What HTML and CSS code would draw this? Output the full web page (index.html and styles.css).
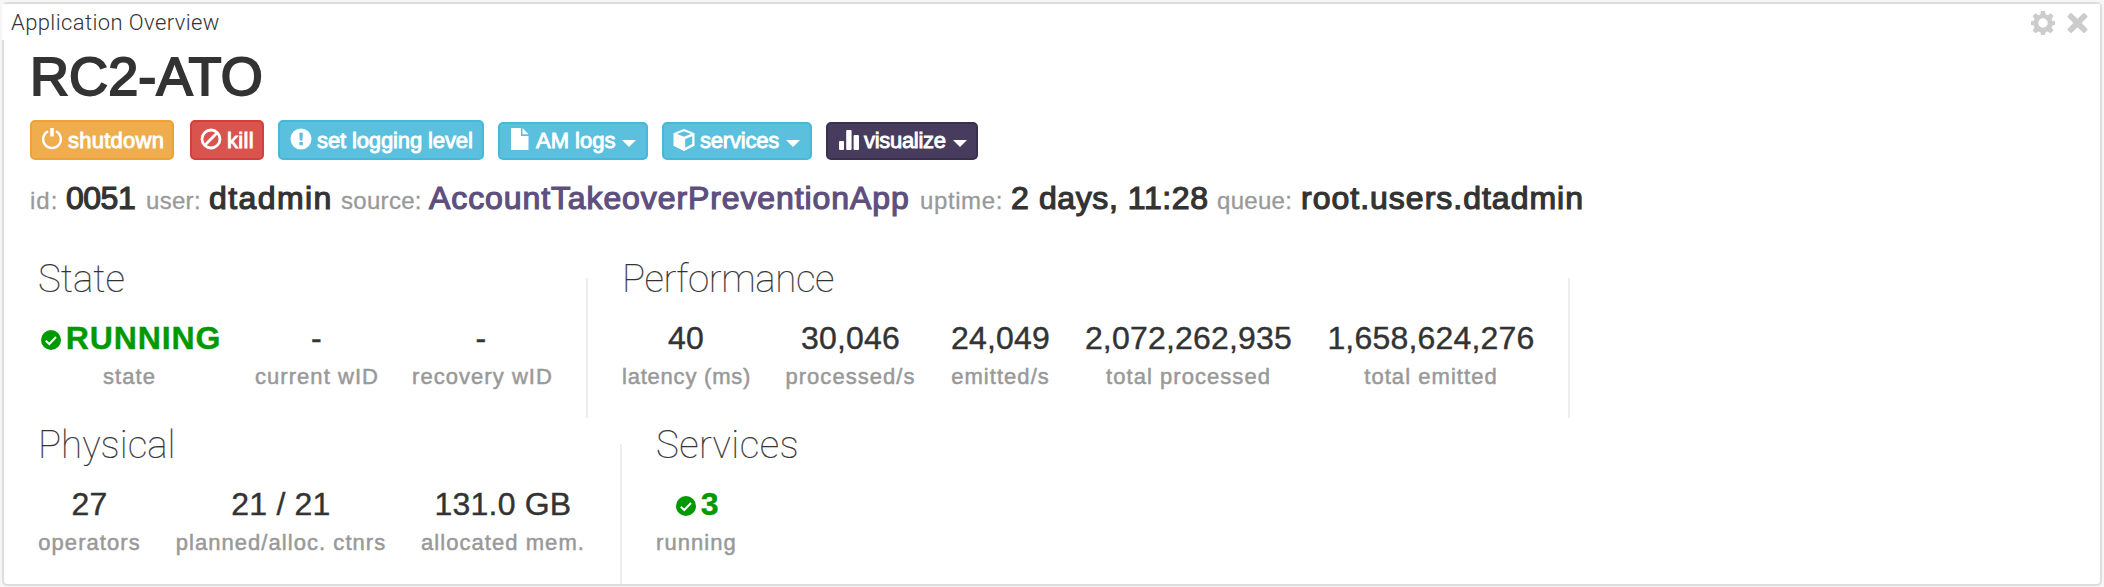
FILE: index.html
```html
<!DOCTYPE html>
<html lang="en">
<head>
<meta charset="utf-8">
<title>Application Overview</title>
<link rel="stylesheet" href="styles.css">
</head>
<body>
<main class="widget">
  <header class="widget-header">
    <h3 class="widget-title">Application Overview</h3>
    <div class="widget-tools">
      <svg class="gear" viewBox="0 0 24 24"><path fill-rule="evenodd" d="M10 0h4l.7 3.4 2 .9 3-2 2.800 2.800-2 3 .9 2L24 10.300v3.500l-2.600.700-.9 2 1.900 2.900-2.900 2.900-3-1.900-2 .9L14 24h-4l-.6-2.700-2-.9-3 1.900-2.800-2.900 1.900-2.900-.9-2L0 13.800v-3.500l2.600-.3.900-2-1.900-2.900 2.800-2.800 3 2 2-.9zM12 7.300a4.700 4.700 0 1 0 0 9.400a4.700 4.700 0 1 0 0-9.400z"/></svg>
      <svg class="close" viewBox="0 0 22 22"><path d="M5 .8 11 6.600 17 .8q.8-.6 1.500 0l2.700 2.700q.6.700 0 1.500L15.400 11l5.800 6q.6.800 0 1.500l-2.700 2.700q-.7.600-1.500 0L11 15.400l-6 5.800q-.8.600-1.500 0L.8 18.500q-.6-.7 0-1.500l5.800-6L.8 5Q.2 4.200.8 3.500L3.500.8Q4.200.2 5 .8z"/></svg>
    </div>
  </header>
  <div class="widget-body">
    <h1 class="app-name">RC2-ATO</h1>
    <div class="actions">
      <button class="btn warning"><svg width="22" height="22" viewBox="0 0 22 22"><path d="M7 3.200a8.900 8.900 0 1 0 8 0" fill="none" stroke="#fff" stroke-width="2.300"/><path d="M9.200 0h3.600v8.500H9.200z"/></svg><span class="t-shutdown">shutdown</span></button>
      <button class="btn danger"><svg width="22" height="22" viewBox="0 0 22 22"><g fill="none" stroke="#fff" stroke-width="2.800"><circle cx="11" cy="11" r="9"/><path d="M4.800 17.200 17.200 4.800"/></g></svg><span class="t-kill">kill</span></button>
      <button class="btn info logging"><svg width="22" height="22" viewBox="0 0 22 22"><path fill-rule="evenodd" d="M11 .5a10.500 10.500 0 1 0 0 21a10.500 10.500 0 1 0 0-21zM9.300 4.800h3.600l-.5 7.800H9.800zM9.400 14h3.400v3.200H9.400z"/></svg><span>set logging level</span></button>
      <button class="btn info menu am"><svg width="18" height="22" viewBox="0 0 18 22"><path d="M0 0h10v8h7.500v14H0zM11.500 0l6 6.300h-6z"/></svg><span>AM logs</span><i class="caret"></i></button>
      <button class="btn info menu services"><svg width="22" height="22" viewBox="0 0 22 22"><path fill-rule="evenodd" d="M11 0 21.500 4.300v12.500L11 22 .5 16.800V4.300zM11 2.200 4 5l7 2.800L18 5zM12.200 10v8.700l7-3.600V7.200z"/></svg><span>services</span><i class="caret"></i></button>
      <button class="btn primary menu visualize"><svg width="20" height="20" viewBox="0 0 20 20"><rect x="0" y="11" width="5" height="9" rx="1"/><rect x="7.200" y="0" width="5.400" height="20" rx="1"/><rect x="14.600" y="5" width="5.400" height="15" rx="1"/></svg><span>visualize</span><i class="caret"></i></button>
    </div>
    <div class="meta">
      <span class="key k-id">id:</span><b class="val v-id">0051</b>
      <span class="key">user:</span><b class="val v-user">dtadmin</b>
      <span class="key">source:</span><a class="val v-source">AccountTakeoverPreventionApp</a>
      <span class="key k-uptime">uptime:</span><b class="val v-uptime">2 days, 11:28</b>
      <span class="key">queue:</span><b class="val v-queue">root.users.dtadmin</b>
    </div>
    <div class="row">
      <section class="group state">
        <h2>State</h2>
        <div class="stats">
          <div class="stat"><div class="num ok"><svg class="check" viewBox="0 0 20 20"><circle cx="10" cy="10" r="10"/><path d="M4.800 10.800 8.300 14l6.700-7" fill="none" stroke="#fff" stroke-width="2"/></svg><span>RUNNING</span></div><div class="label">state</div></div>
          <div class="stat"><div class="num">-</div><div class="label">current wID</div></div>
          <div class="stat"><div class="num">-</div><div class="label">recovery wID</div></div>
        </div>
      </section>
      <section class="group performance">
        <h2>Performance</h2>
        <div class="stats">
          <div class="stat"><div class="num">40</div><div class="label tight">latency (ms)</div></div>
          <div class="stat"><div class="num">30,046</div><div class="label">processed/s</div></div>
          <div class="stat"><div class="num">24,049</div><div class="label">emitted/s</div></div>
          <div class="stat"><div class="num">2,072,262,935</div><div class="label">total processed</div></div>
          <div class="stat"><div class="num">1,658,624,276</div><div class="label">total emitted</div></div>
        </div>
      </section>
    </div>
    <div class="row">
      <section class="group physical">
        <h2>Physical</h2>
        <div class="stats">
          <div class="stat"><div class="num">27</div><div class="label">operators</div></div>
          <div class="stat"><div class="num">21 / 21</div><div class="label">planned/alloc. ctnrs</div></div>
          <div class="stat"><div class="num">131.0 GB</div><div class="label">allocated mem.</div></div>
        </div>
      </section>
      <section class="group running">
        <h2>Services</h2>
        <div class="stats">
          <div class="stat"><div class="num ok"><svg class="check" viewBox="0 0 20 20"><circle cx="10" cy="10" r="10"/><path d="M4.800 10.800 8.300 14l6.700-7" fill="none" stroke="#fff" stroke-width="2"/></svg><span>3</span></div><div class="label">running</div></div>
        </div>
      </section>
    </div>
  </div>
</main>
</body>
</html>
```
FILE: styles.css
```css
* { box-sizing: border-box; }
html { height: 100%; }
body {
  height: 587px;
  margin: 0;
  padding: 2px;
  overflow: hidden;
  background: #f6f6f6;
  color: #333;
  font-family: "Liberation Sans", Arial, sans-serif;
}
h1, h2, h3 { margin: 0; }
svg { display: block; flex: none; fill: currentColor; }

.widget {
  height: 584px;
  border: 2px solid #ddd;
  border-radius: 5px;
  background: #fff;
}
.widget-header {
  display: flex;
  justify-content: space-between;
  height: 36px;
  margin-left: -2px;
  padding: 0 12px 0 9px;
  background: #fff;
}
.widget-title {
  font: 300 22px/36px Roboto, sans-serif;
  letter-spacing: .4px;
  padding-top: 1px;
}
.widget-tools {
  display: flex;
  gap: 12px;
  padding-top: 7px;
  color: #ccc;
}
.gear { width: 24px; height: 24px; }
.close { width: 21px; height: 22px; margin-top: 1px; }

.widget-body { padding-left: 26px; }
.app-name {
  height: 80px;
  font-size: 54px;
  line-height: 73px;
  font-weight: 400;
  letter-spacing: .1px;
  -webkit-text-stroke: 2px #333;
}

.actions {
  display: flex;
  align-items: flex-end;
  gap: 14px;
  height: 40px;
}
.btn {
  display: flex;
  align-items: flex-start;
  height: 40px;
  margin: 0;
  padding: 0 0 0 9px;
  border: 2px solid;
  border-radius: 5px;
  color: #fff;
  font: 22px/37px "Liberation Sans", Arial, sans-serif;
  text-align: left;
  white-space: nowrap;
  -webkit-text-stroke: .9px #fff;
}
.btn svg { margin-top: 6px; margin-right: 5px; }
.warning { width: 144px; margin-right: 2px; background: #f0ad4e; border-color: #eea236; }
.danger { width: 74px; background: #d9534f; border-color: #d43f3a; }
.danger svg { margin-left: -1px; }
.info { background: #5bc0de; border-color: #46b8da; }
.primary { background: #483c5e; border-color: #3a304c; }
.logging { width: 206px; padding-left: 10px; letter-spacing: -.12px; }
.t-shutdown { letter-spacing: .25px; }
.t-kill { letter-spacing: .3px; }
.menu { height: 38px; line-height: 33px; }
.menu svg { margin-top: 5px; }
.am { width: 150px; padding-left: 11px; }
.am svg { margin-top: 4px; margin-right: 7px; }
.services { width: 150px; letter-spacing: -.2px; }
.visualize { width: 152px; padding-left: 11px; letter-spacing: -.3px; }
.visualize svg { margin-top: 6px; }
.caret {
  width: 14px;
  margin: 16px 0 0 7px;
  border: 7px solid transparent;
  border-top-color: #fff;
  border-bottom: 0;
}

.meta {
  display: grid;
  grid-template-columns: 36px 80px 63px 132px 88px 491px 91px 206px 84px auto;
  align-items: baseline;
  height: 118px;
  padding-top: 20px;
  line-height: 37px;
  white-space: nowrap;
}
.key { color: #999; font-size: 24px; letter-spacing: .3px; -webkit-text-stroke: .3px #999; }
.k-id { letter-spacing: 1px; }
.k-uptime { letter-spacing: .6px; }
.val { font-size: 32px; font-weight: 400; letter-spacing: .9px; -webkit-text-stroke: 1.200px currentColor; }
.v-id { letter-spacing: -.5px; }
.v-user { letter-spacing: 1.400px; }
.v-source { color: #5e4f7e; }
.v-uptime { letter-spacing: .6px; }
.v-queue { letter-spacing: 1px; }

.row { display: flex; padding-left: 8px; height: 166px; }
.group { height: 140px; }
.state { width: 550px; border-right: 2px solid #eee; }
.performance { width: 982px; padding-left: 34px; border-right: 2px solid #eee; }
.physical { width: 584px; border-right: 2px solid #eee; }
.running { padding-left: 34px; }
.group h2 {
  height: 46px;
  margin-top: -22px;
  font: 100 38.500px/46px Roboto, sans-serif;
  -webkit-text-stroke: .2px #333;
}
.performance h2 { letter-spacing: -.4px; }
.running h2 { letter-spacing: .4px; }
.stats { display: grid; gap: 34px; }
.state .stats { grid-template-columns: 183px 123px 138px; }
.performance .stats { grid-template-columns: 128px 133px 99px 209px 208px; }
.physical .stats { grid-template-columns: 103px 212px 164px; }
.running .stats { grid-template-columns: 80px; }
.stat { text-align: center; white-space: nowrap; }
.num {
  height: 44px;
  margin-top: 14px;
  font-size: 32px;
  line-height: 44px;
  letter-spacing: .2px;
  -webkit-text-stroke: .4px currentColor;
}
.ok {
  display: flex;
  justify-content: center;
  align-items: center;
  gap: 5px;
  padding-left: 3px;
  color: #090;
  font-weight: 700;
  letter-spacing: .9px;
}
.check { width: 20px; height: 20px; margin-top: 3px; }
.label {
  margin-top: 2px;
  color: #999;
  font-size: 22px;
  line-height: 30px;
  letter-spacing: 1.050px;
  -webkit-text-stroke: .5px #999;
}
.tight { letter-spacing: .78px; }
```
